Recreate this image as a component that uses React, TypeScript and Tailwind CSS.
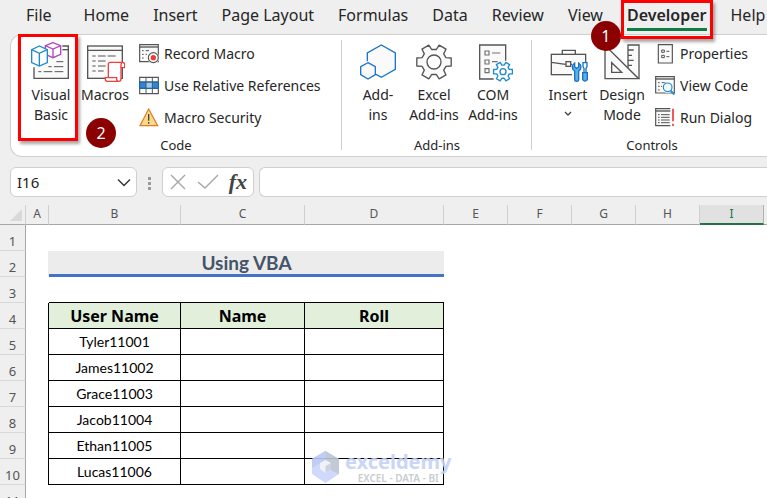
import type { ReactNode } from "react";

const TABS = ["File", "Home", "Insert", "Page Layout", "Formulas", "Data", "Review", "View", "Developer", "Help"];

const COLUMNS = [
    { name: "A", width: "w-[23px]" },
    { name: "B", width: "w-[132px]" },
    { name: "C", width: "w-[124px]" },
    { name: "D", width: "w-[139px]" },
    { name: "E", width: "w-16" },
    { name: "F", width: "w-16" },
    { name: "G", width: "w-16" },
    { name: "H", width: "w-16" },
    { name: "I", width: "w-16" },
];

const USERS = ["Tyler11001", "James11002", "Grace11003", "Jacob11004", "Ethan11005", "Lucas11006"];

// Outline of a six-toothed gear around a centre point
function gearPath(cx: number, cy: number, outer: number, inner: number) {
    const points: string[] = [];
    for (let i = 0; i < 6; i++) {
        const steps: [number, number][] = [[-20, inner], [-13, outer], [13, outer], [20, inner]];
        for (const [offset, r] of steps) {
            const a = ((i * 60 + offset) * Math.PI) / 180;
            points.push(`${(cx + r * Math.cos(a)).toFixed(1)} ${(cy + r * Math.sin(a)).toFixed(1)}`);
        }
    }
    return `M${points.join("L")}Z`;
}

function BigIcon({ children }: { children: ReactNode }) {
    return (
        <svg viewBox="0 0 120 120" className="size-10 shrink-0" fill="none" stroke="#555" strokeWidth="4" aria-hidden="true">
            {children}
        </svg>
    );
}

function SmallIcon({ children }: { children: ReactNode }) {
    return (
        <svg viewBox="0 0 60 60" className="size-5 shrink-0" fill="none" stroke="#555" strokeWidth="3.5" aria-hidden="true">
            {children}
        </svg>
    );
}

function VisualBasicIcon() {
    return (
        <BigIcon>
            <path d="M94 12H112V109H9V76" fill="#fafafa" />
            <path d="M94 23H112" />
            <path d="M76 59H97M52 74H62M69 74H97M22 89H31M38 89H64M71 89H97" strokeWidth="3" />
            <path d="M66 2L43 11V37L66 47L89 37V11Z" fill="#fff" stroke="#b146c2" />
            <path d="M43 11L66 21L89 11M66 21V47" stroke="#b146c2" />
            <path d="M25 12L2 23V62L25 72L49 62V23Z" fill="#fff" stroke="#1e8bcd" />
            <path d="M2 23L25 34L49 23M25 34V72" stroke="#1e8bcd" />
        </BigIcon>
    );
}

function MacrosIcon() {
    return (
        <BigIcon>
            <rect x="8" y="12" width="104" height="97" fill="#fafafa" />
            <path d="M8 25H112" />
            <path d="M22 42H32M39 42H62M68 42H92M22 57H32M39 57H62M22 72H32M39 72H62M22 87H32M39 87H56" strokeWidth="3" />
            <path d="M70 107V67Q70 61 76 61H112Q119 61 119 68V77H108V111Q108 118 101 118H67Q61 118 61 112V107H95V111Q95 118 101 118" fill="#fff" stroke="#f04040" />
            <path d="M108 77V69Q108 61 114 61" stroke="#f04040" />
        </BigIcon>
    );
}

function AddInsIcon() {
    return (
        <BigIcon>
            <path d="M28 58V33L70 9L112 33V82L70 106L54 97" fill="#fafafa" stroke="#1b75d0" />
            <path d="M30 62L52 74V98L30 111L8 98V74Z" fill="#fafafa" stroke="#1b75d0" />
        </BigIcon>
    );
}

function ExcelAddInsIcon() {
    return (
        <BigIcon>
            <path d={gearPath(60, 60, 53, 38)} fill="#fafafa" strokeLinejoin="round" />
            <circle cx="60" cy="60" r="21" fill="#fff" />
        </BigIcon>
    );
}

function ComAddInsIcon() {
    return (
        <BigIcon>
            <path d="M98 56V9H20V111H62" fill="#fafafa" />
            <path d="M36 27h12v12h-12zM36 54h12v12h-12zM36 80h12v12h-12zM57 33H82M57 59H74" strokeWidth="3.5" stroke="#707070" />
            <path d={gearPath(90, 89, 29, 20)} fill="#fff" stroke="#1e8bcd" strokeLinejoin="round" />
            <circle cx="90" cy="89" r="9" stroke="#1e8bcd" />
        </BigIcon>
    );
}

function InsertIcon() {
    return (
        <BigIcon>
            <path d="M43 36V25H82V36" />
            <rect x="10" y="37" width="103" height="61" fill="#fafafa" />
            <path d="M10 61L53 67M68 67H80" />
            <rect x="54" y="59" width="14" height="14" fill="#fff" />
            <path d="M72 62H120V120H72Z" fill="#fff" stroke="none" />
            <path d="M80 63Q73 67 73 75Q73 83 80 87V114Q80 118 86 118Q92 118 92 114V87Q99 83 99 75Q99 67 92 63V75L86 79L80 75Z" fill="#5ab0ee" stroke="#1673c4" />
            <path d="M105 62H117V74L114 79V92H108V79L105 74Z" fill="#fff" stroke="#1673c4" />
            <path d="M104 92H118V113Q111 122 104 113Z" fill="#5ab0ee" stroke="#1673c4" />
        </BigIcon>
    );
}

function DesignModeIcon() {
    return (
        <BigIcon>
            <path d="M78 78V9H111V110" fill="#fafafa" />
            <path d="M78 24H95M78 40H90M78 55H95M78 70H90" />
            <path d="M9 10V110H110Z" fill="#fafafa" />
            <path d="M29 62V91H59Z" fill="#fff" />
        </BigIcon>
    );
}

function RecordIcon() {
    return (
        <SmallIcon>
            <path d="M2 2H58V53H2Z" fill="#fafafa" />
            <path d="M2 9H58" strokeWidth="4" />
            <path d="M9 20H14M20 20H30M9 31H14M9 42H14M20 31H24" strokeWidth="3" />
            <circle cx="43" cy="41" r="18" fill="#fff" stroke="none" />
            <circle cx="43" cy="41" r="15" />
            <circle cx="43" cy="41" r="8" fill="#f03a3a" stroke="none" />
        </SmallIcon>
    );
}

function RelativeIcon() {
    return (
        <SmallIcon>
            <path d="M2 4H58V53H2Z" fill="#fff" />
            <path d="M2 18H58V37H2Z" fill="#2f86d6" stroke="none" />
            <path d="M21 18H40V37H21Z" fill="#9ccdf5" stroke="none" />
            <path d="M21 4V53M40 4V53M2 18H58M2 37H58" strokeWidth="3" />
            <path d="M2 18H58V37H2Z" stroke="#1368b0" strokeWidth="3" />
        </SmallIcon>
    );
}

function WarningIcon() {
    return (
        <SmallIcon>
            <path d="M29 3L3 53H56Z" fill="#fbd98a" stroke="#e07b1f" />
            <path d="M29 18V38M29 42V47" stroke="#444" strokeWidth="4" />
        </SmallIcon>
    );
}

function PropertiesIcon() {
    return (
        <SmallIcon>
            <path d="M10 2H52V57H10Z" fill="#fafafa" />
            <path d="M20 18h8v7h-8zM20 34h8v7h-8zM34 22H43M34 38H43" strokeWidth="3" />
        </SmallIcon>
    );
}

function ViewCodeIcon() {
    return (
        <SmallIcon>
            <path d="M2 2H58V51H2Z" fill="#fafafa" />
            <path d="M2 9H58" strokeWidth="4" />
            <path d="M9 20H14M20 20H34M9 31H14M9 42H14M18 31H22" strokeWidth="3" />
            <circle cx="38" cy="34" r="17" fill="#fff" stroke="none" />
            <circle cx="38" cy="34" r="13" fill="#f0f8ff" stroke="#1e8bcd" />
            <path d="M47 44L58 56" stroke="#1e8bcd" strokeWidth="5" />
        </SmallIcon>
    );
}

function RunDialogIcon() {
    return (
        <SmallIcon>
            <path d="M46 2H2V53H46" fill="#fafafa" />
            <path d="M2 9H46" strokeWidth="4" />
            <path d="M9 20H14M18 20H44M9 28H14M18 28H44M9 36H14M18 36H44M9 44H14M18 44H44" strokeWidth="3" />
            <path d="M54 2V40M54 47V54" stroke="#f03a3a" strokeWidth="5" />
        </SmallIcon>
    );
}

function Callout({ number, className }: { number: number; className: string }) {
    return (
        <span className={`absolute z-20 flex size-[30px] items-center justify-center rounded-full bg-[#8b0000] text-base font-normal text-white ${className}`}>
            {number}
        </span>
    );
}

function BigButton({ icon, lines, width, children }: { icon: ReactNode; lines: ReactNode[]; width: string; children?: ReactNode }) {
    return (
        <button type="button" className={`relative flex shrink-0 flex-col items-center gap-[3px] pt-1 leading-5 ${width}`}>
            {icon}
            <span className="flex flex-col items-center whitespace-nowrap">
                {lines.map((line, i) => (
                    <span key={i}>{line}</span>
                ))}
            </span>
            {children}
        </button>
    );
}

function SmallButton({ icon, label }: { icon: ReactNode; label: string }) {
    return (
        <button type="button" className="flex h-8 items-center gap-[5px] whitespace-nowrap">
            {icon}
            {label}
        </button>
    );
}

function Group({ title, className, children }: { title: string; className: string; children: ReactNode }) {
    return (
        <section className={`flex shrink-0 flex-col ${className}`}>
            <div className="flex h-24">{children}</div>
            <h2 className="text-center text-[13px] leading-[22px]">{title}</h2>
        </section>
    );
}

function Ribbon() {
    return (
        <div className="ml-2.5 flex h-[123px] rounded-l-xl border border-r-0 border-[#cfcfcf] bg-white pt-[3px] text-sm">
            <Group title="Code" className="w-[330px] px-[13px]">
                <BigButton icon={<VisualBasicIcon />} lines={["Visual", "Basic"]} width="w-[54px]">
                    <span className="absolute -top-1 -left-1.5 h-[107px] w-[60px] border-[3px] border-[#fe0000] shadow-[2px_3px_3px_rgba(0,0,0,0.35)]" />
                </BigButton>
                <BigButton icon={<MacrosIcon />} lines={["Macros"]} width="w-[54px]">
                    <Callout number={2} className="top-20 left-2" />
                </BigButton>
                <div className="ml-[7px]">
                    <SmallButton icon={<RecordIcon />} label="Record Macro" />
                    <SmallButton icon={<RelativeIcon />} label="Use Relative References" />
                    <SmallButton icon={<WarningIcon />} label="Macro Security" />
                </div>
            </Group>
            <div className="mt-0.5 h-[110px] w-px shrink-0 bg-[#cfcfcf]" />
            <Group title="Add-ins" className="w-[189px] pl-[9px] pr-2">
                <BigButton icon={<AddInsIcon />} lines={["Add-", "ins"]} width="w-[54px]" />
                <BigButton icon={<ExcelAddInsIcon />} lines={["Excel", "Add-ins"]} width="w-[58px]" />
                <BigButton icon={<ComAddInsIcon />} lines={["COM", "Add-ins"]} width="w-[60px]" />
            </Group>
            <div className="mt-0.5 h-[110px] w-px shrink-0 bg-[#cfcfcf]" />
            <Group title="Controls" className="w-[240px] px-[9px]">
                <BigButton
                    icon={<InsertIcon />}
                    lines={[
                        "Insert",
                        <svg key="arrow" viewBox="0 0 8 6" className="mt-1.5 h-1.5 w-2" fill="none" stroke="#444" strokeWidth="1.3">
                            <path d="M1 1L4 4L7 1" />
                        </svg>,
                    ]}
                    width="w-[54px]"
                />
                <BigButton icon={<DesignModeIcon />} lines={["Design", "Mode"]} width="w-[54px]" />
                <div className="ml-1.5">
                    <SmallButton icon={<PropertiesIcon />} label="Properties" />
                    <SmallButton icon={<ViewCodeIcon />} label="View Code" />
                    <SmallButton icon={<RunDialogIcon />} label="Run Dialog" />
                </div>
            </Group>
        </div>
    );
}

function FormulaBar() {
    return (
        <div className="mt-2.5 ml-2.5 flex h-[30px]">
            <div className="flex w-[127px] items-center rounded-md border border-[#cfcfcf] bg-white pr-[5px] pl-1.5">
                <input aria-label="Name box" defaultValue="I16" className="w-full min-w-0 bg-transparent text-[15px] text-[#222] outline-none" />
                <button type="button" aria-label="Show names">
                    <svg viewBox="0 0 14 9" className="h-[9px] w-3.5" fill="none" stroke="#333" strokeWidth="1.4">
                        <path d="M1 1.500L7 7.500L13 1.500" />
                    </svg>
                </button>
            </div>
            <svg viewBox="0 0 25 30" className="w-[25px] shrink-0" fill="#9a9a9a" aria-hidden="true">
                <path d="M11 10h3v3h-3zM11 15h3v3h-3zM11 20h3v3h-3z" />
            </svg>
            <div className="flex w-[92px] shrink-0 items-center justify-between rounded-md border border-[#cfcfcf] bg-white px-1.5">
                <button type="button" aria-label="Cancel">
                    <svg viewBox="0 0 18 18" className="size-[18px]" fill="none" stroke="#a6a6a6" strokeWidth="1.4">
                        <path d="M2 2L16 16M16 2L2 16" />
                    </svg>
                </button>
                <button type="button" aria-label="Enter">
                    <svg viewBox="0 0 22 18" className="h-[18px] w-[22px]" fill="none" stroke="#a6a6a6" strokeWidth="1.4">
                        <path d="M1 9L8 15L21 2" />
                    </svg>
                </button>
                <button type="button" aria-label="Insert function" className="font-['Liberation_Serif',serif] text-[22px] font-bold leading-6 text-[#444] italic">
                    fx
                </button>
            </div>
            <input aria-label="Formula" className="ml-[5px] min-w-0 flex-1 rounded-l-md border border-r-0 border-[#cfcfcf] bg-white px-2 text-sm outline-none" />
        </div>
    );
}

function RowHeader({ row }: { row: number }) {
    return (
        <th scope="row" className="h-[26px] border-r border-b border-r-[#a6a6a6] border-b-[#d8d8d8] bg-[#efefef] pt-1.5 text-[13px] leading-4 font-normal text-[#555]">
            {row}
        </th>
    );
}

function Watermark() {
    return (
        <div className="absolute top-[246px] left-[312px] flex items-center gap-1.5 opacity-90">
            <svg viewBox="0 0 27 32" className="h-8 w-[27px]" aria-hidden="true">
                <path d="M13.500 0L27 8V23L13.500 32L0 23V8Z" fill="#c9d5fb" />
                <path d="M13.500 0L27 8V23L18 19V12L13.500 9L0 16V8Z" fill="#bcc5d4" />
                <path d="M0 8L13.500 0V9L0 17Z" fill="#b9c9f3" />
                <path d="M13.500 9L19 12V18L13.500 22L8 18V12Z" fill="#eef1f8" />
                <path d="M13.500 15L19 12V18L13.500 22Z" fill="#c8cfda" />
            </svg>
            <div className="flex flex-col items-center font-bold">
                <span className="text-xl leading-[22px] text-[#c5d1f8]">exceldemy</span>
                <span className="text-[10px] leading-[10px] font-semibold text-[#c3c8ce]">EXCEL - DATA - BI</span>
            </div>
        </div>
    );
}

function Sheet() {
    return (
        <div className="relative mt-2 min-h-0 flex-1 overflow-hidden bg-white">
            <table className="w-full table-fixed border-separate border-spacing-0">
                <colgroup>
                    <col className="w-[26px]" />
                    {COLUMNS.map((c) => (
                        <col key={c.name} className={c.width} />
                    ))}
                    <col />
                </colgroup>
                <thead>
                    <tr className="bg-[#efefef] text-xs leading-4 text-[#555]">
                        <td className="h-5 border-r border-b border-r-[#d0d0d0] border-b-[#a6a6a6]">
                            <svg viewBox="0 0 12 12" className="ml-auto mr-[3px] size-3" aria-hidden="true">
                                <path d="M12 0V12H0Z" fill="#d9d9d9" />
                            </svg>
                        </td>
                        {COLUMNS.map((c) => (
                            <th
                                key={c.name}
                                scope="col"
                                className={
                                    c.name === "I"
                                        ? "border-r border-b-2 border-r-[#b0b0b0] border-b-[#217346] bg-[#e1e1e1] font-normal text-[#217346]"
                                        : "border-r border-b border-r-[#d0d0d0] border-b-[#a6a6a6] pb-px font-normal"
                                }
                            >
                                {c.name}
                            </th>
                        ))}
                        <td className="border-b border-b-[#a6a6a6]" />
                    </tr>
                </thead>
                <tbody className="text-center">
                    <tr>
                        <RowHeader row={1} />
                        <td colSpan={10} />
                    </tr>
                    <tr>
                        <RowHeader row={2} />
                        <td className="border-r border-[#ececec]" />
                        <td colSpan={3} className="border-b-[3px] border-[#4472c4] bg-[#ececec] font-['Lato',sans-serif] text-[19px] leading-5 font-bold text-[#44546a]">
                            Using VBA
                        </td>
                        <td colSpan={6} />
                    </tr>
                    <tr>
                        <RowHeader row={3} />
                        <td />
                        <td colSpan={3} className="border-b border-black" />
                        <td colSpan={6} />
                    </tr>
                    <tr>
                        <RowHeader row={4} />
                        <td className="border-r border-black" />
                        {["User Name", "Name", "Roll"].map((h) => (
                            <th key={h} className="border-r border-b border-black bg-[#e2efda] text-base leading-5 font-bold text-black">
                                {h}
                            </th>
                        ))}
                        <td colSpan={6} />
                    </tr>
                    {USERS.map((user, i) => (
                        <tr key={user}>
                            <RowHeader row={i + 5} />
                            <td className="border-r border-black" />
                            <td className="border-r border-b border-black font-['Lato',sans-serif] text-sm leading-5 text-black">{user}</td>
                            <td className="border-r border-b border-black" />
                            <td className="border-r border-b border-black" />
                            <td colSpan={6} />
                        </tr>
                    ))}
                    <tr>
                        <RowHeader row={11} />
                        <td colSpan={10} />
                    </tr>
                </tbody>
            </table>
            <Watermark />
        </div>
    );
}

export default function App() {
    return (
        <div className="flex h-screen flex-col overflow-hidden bg-[#efefef] font-['Noto_Sans',sans-serif] text-[#262626]">
            <nav className="relative z-10 flex h-[34px] shrink-0 gap-6 pl-[26px]">
                {TABS.map((tab) => {
                    const active = tab === "Developer";
                    return (
                        <button
                            key={tab}
                            type="button"
                            className={`relative h-[31px] shrink-0 border-b-[3px] pt-0.5 text-base leading-6 whitespace-nowrap ${
                                active ? "border-[#107c41] font-semibold" : "border-transparent"
                            } ${tab === "File" ? "mr-2" : ""}`}
                        >
                            {tab}
                            {active && (
                                <>
                                    <span className="absolute -inset-x-1.5 top-0 h-[39px] border-[3px] border-[#fe0000] shadow-[2px_3px_3px_rgba(0,0,0,0.35)]" />
                                    <Callout number={1} className="top-[21px] -left-9" />
                                </>
                            )}
                        </button>
                    );
                })}
            </nav>
            <Ribbon />
            <FormulaBar />
            <Sheet />
        </div>
    );
}
